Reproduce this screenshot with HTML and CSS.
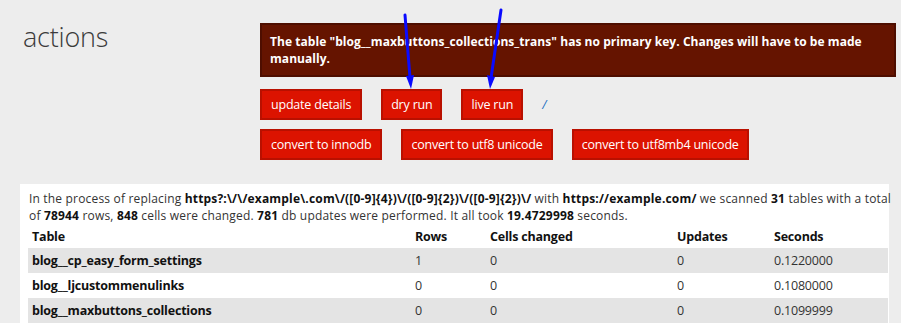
FILE: index.html
```html
<!DOCTYPE html>
<html>
<head>
<meta charset="utf-8">
<link rel="stylesheet" href="styles.css">
</head>
<body>
<div class="page">
  <header class="top">
    <h1 class="title">actions</h1>
    <div class="side">
      <div class="notice">The table "blog__maxbuttons_collections_trans" has no primary key. Changes will have to be made manually.</div>
      <div class="btnrow">
        <button class="btn">update details</button>
        <button class="btn">dry run</button>
        <button class="btn">live run</button>
        <span class="sep">/</span>
      </div>
      <div class="btnrow">
        <button class="btn">convert to innodb</button>
        <button class="btn">convert to utf8 unicode</button>
        <button class="btn">convert to utf8mb4 unicode</button>
      </div>
    </div>
  </header>
  <section class="panel">
    <p class="summary">In the process of replacing <b>https?:\/\/example\.com\/([0-9]{4})\/([0-9]{2})\/([0-9]{2})\/</b> with <b>https://example.com/</b> we scanned <b>31</b> tables with a total of <b>78944</b> rows, <b>848</b> cells were changed. <b>781</b> db updates were performed. It all took <b>19.4729998</b> seconds.</p>
    <table class="results">
      <colgroup>
        <col class="c-table"><col class="c-rows"><col class="c-cells"><col class="c-upd"><col class="c-sec">
      </colgroup>
      <thead>
        <tr><th>Table</th><th>Rows</th><th>Cells changed</th><th>Updates</th><th>Seconds</th></tr>
      </thead>
      <tbody>
        <tr><td class="name">blog__cp_easy_form_settings</td><td>1</td><td>0</td><td>0</td><td>0.1220000</td></tr>
        <tr><td class="name">blog__ljcustommenulinks</td><td>0</td><td>0</td><td>0</td><td>0.1080000</td></tr>
        <tr><td class="name">blog__maxbuttons_collections</td><td>0</td><td>0</td><td>0</td><td>0.1099999</td></tr>
      </tbody>
    </table>
  </section>
  <svg class="arrows" width="901" height="323" viewBox="0 0 901 323" aria-hidden="true">
    <g stroke="#0a0aff" stroke-width="3" stroke-linecap="round" fill="none">
      <line x1="405" y1="15" x2="410" y2="78"/>
      <line x1="501" y1="10" x2="491" y2="78"/>
    </g>
    <g fill="#0a0aff">
      <polygon points="406,76 414,75 411,89"/>
      <polygon points="487,75 495,77 490,89"/>
    </g>
  </svg>
</div>
</body>
</html>
```
FILE: styles.css
```css
html, body {
  margin: 0;
  padding: 0;
  background: #ededed;
}
body {
  font-family: "Open Sans", "Noto Sans", sans-serif;
  color: #333;
}
.page {
  position: relative;
  width: 901px;
  height: 323px;
  overflow: hidden;
}
.top {
  display: flex;
  align-items: flex-start;
}
.title {
  margin: 0;
  width: 237px;
  padding: 18px 0 0 23px;
  font-size: 27px;
  font-weight: 300;
  color: #3b3b3b;
  line-height: 38px;
  letter-spacing: -0.2px;
}
.side {
  padding-top: 23px;
  width: 636px;
}
.notice {
  background: #651400;
  border: 2px solid #4e0e00;
  color: #fff;
  font-weight: 700;
  font-size: 12px;
  line-height: 17px;
  padding: 8px 8px 8px 8px;
  letter-spacing: 0.05px;
}
.btnrow {
  display: flex;
  align-items: center;
  gap: 19px;
  margin-top: 12px;
}
.btnrow + .btnrow {
  margin-top: 9px;
}
.btn {
  font-family: inherit;
  background: #dc1300;
  border: 2px solid #b91000;
  color: #fff;
  font-size: 12.5px;
  height: 31px;
  padding: 0 8px;
  margin: 0;
  letter-spacing: -0.2px;
}
.btn:first-child {
  padding: 0 9px;
}
.sep {
  color: #1a6fc0;
  font-size: 12px;
  font-style: italic;
}
.panel {
  margin: 24px 0 0 20px;
  width: 869px;
  background: #fff;
  padding: 6px 0 0 0;
  height: 200px;
}
.summary {
  margin: 0 0 0 9px;
  font-size: 12px;
  line-height: 17px;
  letter-spacing: 0.18px;
  width: 864px;
}
.summary b {
  color: #111;
}
.results {
  margin: 0 0 0 8px;
  width: 860px;
  border-collapse: collapse;
  table-layout: fixed;
  font-size: 12.5px;
  letter-spacing: -0.2px;
}
.c-table { width: 383px; }
.c-rows { width: 75px; }
.c-cells { width: 187px; }
.c-upd { width: 97px; }
.c-sec { width: 118px; }
.results th {
  text-align: left;
  font-weight: 700;
  color: #111;
  padding: 0 4px;
  height: 24px;
}
.results td {
  padding: 0 4px;
  height: 25px;
  color: #333;
}
.results td.name {
  font-weight: 700;
  color: #111;
}
.results tbody tr:nth-child(odd) {
  background: #e4e4e4;
}
.arrows {
  position: absolute;
  left: 0;
  top: 0;
  pointer-events: none;
}
```
